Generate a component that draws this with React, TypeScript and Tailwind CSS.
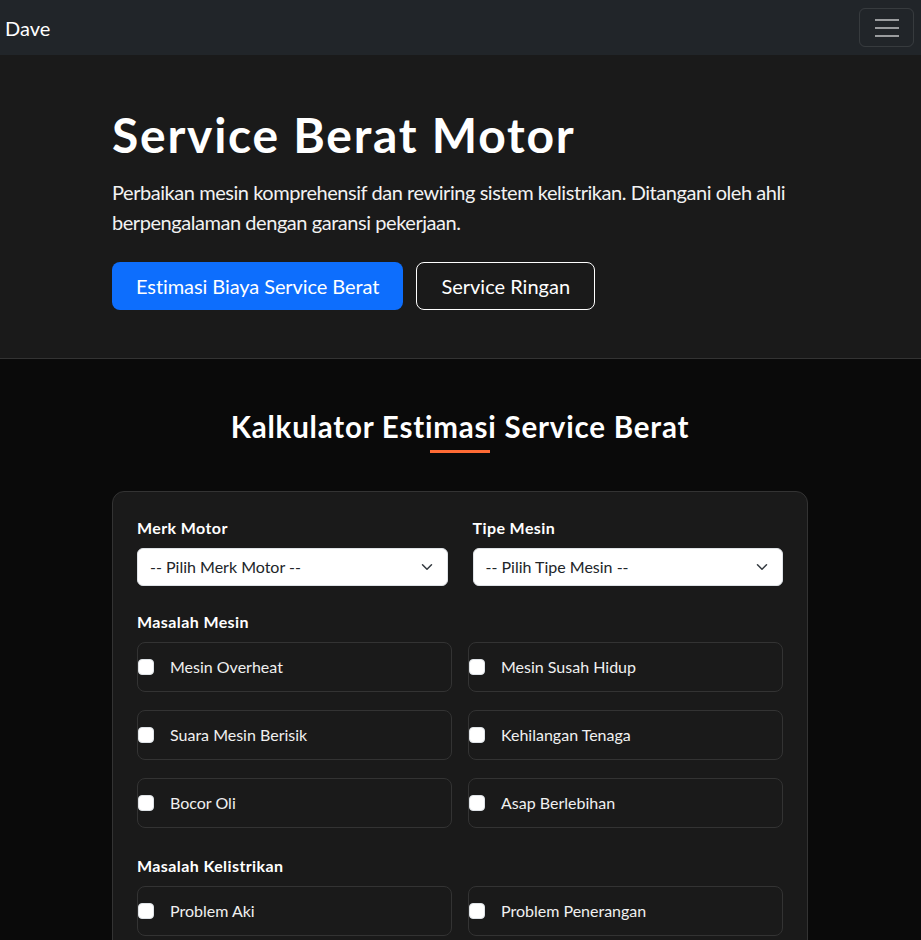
import React from "react";

const font = { fontFamily: '"Lato", "Noto Sans", sans-serif' };

function Check({ label }: { label: string }) {
  return (
    <label className="h-[50px] border border-[#333333] rounded-lg bg-[#1a1a1a] flex items-center">
      <span className="w-4 h-4 bg-white rounded-[4px] border border-[#dee2e6] shrink-0"></span>
      <span className="ml-4 text-[16px] text-[#f0f0f0]">{label}</span>
    </label>
  );
}

function Select({ text }: { text: string }) {
  return (
    <div className="h-[38px] bg-white rounded-md border border-[#dee2e6] flex items-center justify-between pl-3 pr-3">
      <span className="text-[16px] text-[#212529]">{text}</span>
      <svg width="16" height="12" viewBox="0 0 16 16" fill="none">
        <path d="m2 5 6 6 6-6" stroke="#343a40" strokeWidth="2" strokeLinecap="round" strokeLinejoin="round" />
      </svg>
    </div>
  );
}

function Label({ children }: { children: React.ReactNode }) {
  return <div className="text-[16px] leading-6 font-bold tracking-[0.4px] text-white">{children}</div>;
}

export default function App() {
  return (
    <div className="min-h-[940px] bg-[#0a0a0a]" style={font}>
      <nav className="h-[55px] bg-[#212529] flex items-center justify-between pl-[5px] pr-[7px]">
        <span className="text-[20px] text-white">Dave</span>
        <button className="w-[55px] h-[39px] border border-white/10 rounded-md flex items-center justify-center">
          <svg width="30" height="30" viewBox="0 0 30 30">
            <path d="M3 7h24M3 15h24M3 23h24" stroke="rgba(255,255,255,0.55)" strokeWidth="2" />
          </svg>
        </button>
      </nav>

      <header className="bg-[#1a1a1a] border-b border-[#333333] pt-[51px] pb-12">
        <div className="w-[696px] ml-[112px]">
          <h1 className="text-[48px] leading-[1.2] font-bold tracking-[1.75px] text-white mb-[13px]">Service Berat Motor</h1>
          <p className="text-[20px] leading-[30px] tracking-[-0.45px] text-[#f2f2f2] mb-[25px]">
            Perbaikan mesin komprehensif dan rewiring sistem kelistrikan. Ditangani oleh ahli berpengalaman dengan garansi pekerjaan.
          </p>
          <div className="flex gap-[13px]">
            <button className="h-[48px] px-6 rounded-lg bg-[#0d6efd] text-white text-[20px] tracking-[-0.08px]">Estimasi Biaya Service Berat</button>
            <button className="h-[48px] px-6 rounded-lg border border-white text-white text-[20px]">Service Ringan</button>
          </div>
        </div>
      </header>

      <section className="pt-[50px] pb-12">
        <div className="w-[696px] ml-[112px]">
          <h2 className="text-center text-[29.5px] leading-[1.2] font-bold tracking-[0.8px] text-white">Kalkulator Estimasi Service Berat</h2>
          <div className="w-[60px] h-[3px] bg-[#ff6b35] mx-auto mt-[6px] mb-[38px]"></div>

          <div className="bg-[#1a1a1a] border border-[#333333] rounded-xl p-6">
            <div className="grid grid-cols-2 gap-x-[25px]">
              <div>
                <div className="mb-2"><Label>Merk Motor</Label></div>
                <Select text="-- Pilih Merk Motor --" />
              </div>
              <div>
                <div className="mb-2"><Label>Tipe Mesin</Label></div>
                <Select text="-- Pilih Tipe Mesin --" />
              </div>
            </div>

            <div className="mt-6 mb-2"><Label>Masalah Mesin</Label></div>
            <div className="grid grid-cols-2 gap-x-4 gap-y-[18px]">
              <Check label="Mesin Overheat" />
              <Check label="Mesin Susah Hidup" />
              <Check label="Suara Mesin Berisik" />
              <Check label="Kehilangan Tenaga" />
              <Check label="Bocor Oli" />
              <Check label="Asap Berlebihan" />
            </div>

            <div className="mt-[26px] mb-2"><Label>Masalah Kelistrikan</Label></div>
            <div className="grid grid-cols-2 gap-x-4 gap-y-[18px]">
              <Check label="Problem Aki" />
              <Check label="Problem Penerangan" />
              <Check label="Sistem Starter" />
              <Check label="Kabel Terbakar" />
            </div>
          </div>
        </div>
      </section>
    </div>
  );
}
